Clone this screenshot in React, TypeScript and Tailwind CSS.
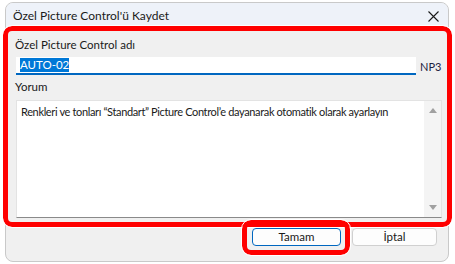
import React from "react";

const ui = { fontFamily: 'Lato, "Noto Sans", sans-serif' };

function CloseIcon() {
  return (
    <svg width="11" height="11" viewBox="0 0 11 11" fill="none">
      <path d="M0.5 0.5 L10.5 10.5 M10.5 0.5 L0.5 10.5" stroke="#1a1a1a" strokeWidth="1.1" />
    </svg>
  );
}

export default function App() {
  return (
    <div className="relative w-[455px] h-[264px] bg-white overflow-hidden text-[12px] text-[#1a1a1a]" style={ui}>
      {/* dialog window */}
      <div className="ml-[5px] mt-[2px] w-[444px] h-[260px] rounded-[8px] border border-[#c9c9c9] bg-[#f0f0f0] overflow-hidden flex flex-col">
        {/* title bar */}
        <div className="h-[26px] shrink-0 bg-[#eef2f9] flex items-center justify-between pl-[7px] pr-[9px]">
          <span className="text-[12px] leading-none">Özel Picture Control'ü Kaydet</span>
          <CloseIcon />
        </div>

        {/* body */}
        <div className="flex flex-col pl-[9px] pr-[6px] pt-[8px]">
          <div className="leading-[16px] text-[11.5px]">Özel Picture Control adı</div>
          <div className="flex items-end mt-[4px] ml-[1px]">
            <div className="w-[400px] h-[18px] bg-white border-b-2 border-[#0067c0] flex items-center pl-[4px]">
              <span className="bg-[#0078d7] text-white text-[11.5px] leading-[14px]">AUTO-02</span>
            </div>
            <span className="ml-[4px] text-[11px] leading-[16px] text-[#1c2340]">NP3</span>
          </div>
          <div className="mt-[4px] leading-[16px] text-[11.5px]">Yorum</div>
          <div className="mt-[5px] ml-[1px] w-[426px] h-[118px] bg-white border border-[#e3e3e3] border-b-[#8a8a8a] flex">
            <div className="flex-1 pl-[4px] pt-[3px] text-[11px] leading-[16px] tracking-[-0.36px]">
              Renkleri ve tonları “Standart” Picture Control’e dayanarak otomatik olarak ayarlayın
            </div>
            <div className="w-[17px] bg-[#f4f4f4] flex flex-col items-center justify-between py-[7px]">
              <span className="w-0 h-0 border-l-[4px] border-r-[4px] border-b-[5px] border-l-transparent border-r-transparent border-b-[#a0a0a0]" />
              <span className="w-0 h-0 border-l-[4px] border-r-[4px] border-t-[5px] border-l-transparent border-r-transparent border-t-[#a0a0a0]" />
            </div>
          </div>
        </div>

        {/* footer */}
        <div className="flex justify-end gap-[11px] pr-[11px] mt-[10px]">
          <button className="w-[89px] h-[18px] rounded-[4px] bg-[#fdfdfd] border border-[#0067c0] text-[11.5px] leading-none">
            Tamam
          </button>
          <button className="w-[85px] h-[18px] rounded-[4px] bg-[#fdfdfd] border border-[#d0d0d0] text-[11.5px] leading-none">
            İptal
          </button>
        </div>
      </div>

      {/* red highlight overlays */}
      <div className="absolute left-[3px] top-[26px] w-[449px] h-[201px] rounded-[9px] border-[5px] border-[#ff0000] outline outline-1 outline-white pointer-events-none" />
      <div className="absolute left-[242px] top-[220px] w-[108px] h-[35px] rounded-[9px] border-[5px] border-[#ff0000] outline outline-1 outline-white pointer-events-none" />
    </div>
  );
}
